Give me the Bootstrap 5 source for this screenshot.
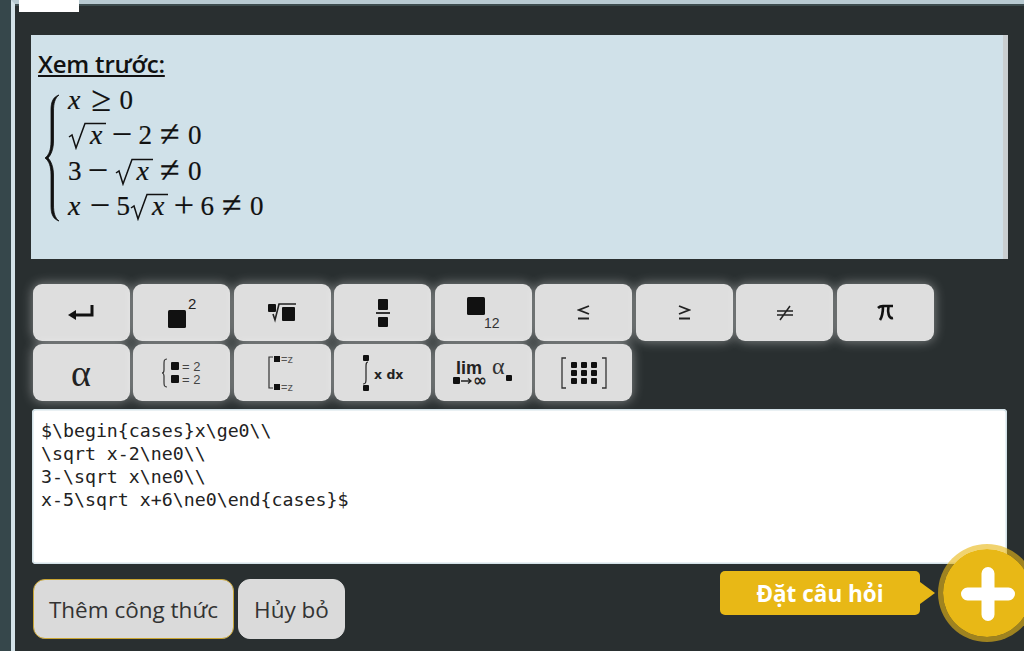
<!DOCTYPE html>
<html lang="vi">
<head>
<meta charset="utf-8">
<title>Xem trước</title>
<link href="https://cdn.jsdelivr.net/npm/bootstrap@5.3.0/dist/css/bootstrap.min.css" rel="stylesheet">
<style>
html,body{height:651px;overflow:hidden}
body{background:#292f30;font-family:"Open Sans",sans-serif;position:relative}
.shell{height:651px;margin-left:11px;border-left:4px solid #d3e2e8;border-top:4px solid #b8cad1;padding:31px 16px 0 16px;box-shadow:-11px 0 0 #36474b,inset 0 2px 0 #3d4c4e}
.top-tab{position:absolute;left:19px;top:0;width:60px;height:12px;background:#fff}
.preview-box{height:224px;background:#d0e1e9;border-right:5px solid #c9ced0;padding:16px 7px;color:#111}
.preview-title{font-size:24px;font-weight:600;text-decoration:underline;line-height:26px;letter-spacing:-.2px}
.math-area{margin:5px 0 0 6px;gap:8px;height:140px;align-items:flex-start}
.math-brace{margin-top:12px;flex:none}
.math-lines{font-family:"Liberation Serif",serif;font-size:27px;line-height:35.3px;color:#111;-webkit-text-stroke:.2px #111}
.math-line{height:35.3px;white-space:nowrap;display:flex;align-items:baseline}
.math-line i{font-size:28px;width:15.5px;display:inline-block}
.op-rel,.op-bin{display:inline-block;width:21px;text-align:center;font-size:36px;line-height:0;transform:translateY(2px);font-weight:300}
.op-rel{margin:0 7.5px}
.op-bin{margin:0 6px}
.rad{display:inline-flex;align-items:baseline;position:relative;padding-left:22px}
.rad svg{position:absolute;left:0;top:5px}
.key-grid{display:grid;grid-template-columns:repeat(9,97px);column-gap:3.5px;row-gap:3px;margin:25px 0 0 1.5px}
.key{height:57px;background:#dedede;border-radius:9px;box-shadow:0 0 12px rgba(255,255,255,.45);display:flex;align-items:center;justify-content:center;color:#111;padding:0;border:0}
.key-alpha{font-family:"Liberation Serif",serif;font-size:38px;line-height:1;color:#222}
.latex-input{display:block;width:975px;height:155px;margin:8px 0 0 1px;padding:11px 9px;border:0;border-radius:4px;box-shadow:inset 0 0 0 1.5px #d3e2e8;resize:none;background:#fff;font-family:"DejaVu Sans Mono","Liberation Mono",monospace;font-size:18.24px;line-height:22.9px;color:#222;overflow:hidden}
.act-row{gap:4px;margin:15px 0 0 2px}
.act-btn{height:60px;border-radius:12px;background:#dadada;color:#333;font-size:22.5px;font-family:"Open Sans",sans-serif;padding:1px 0 0;border:1px solid #dadada}
.act-main{border:1.5px solid #c9a533;width:201px}
.act-side{width:107px}
.ask-wrap{position:absolute;left:720px;top:544px;width:304px;height:107px}
.ask-label{position:absolute;left:0;top:27px;width:200px;height:44px;background:#e8b816;border-radius:5px;color:#fff;font-weight:700;font-size:22.5px;line-height:45px;text-align:center}
.ask-tip{position:absolute;left:200px;top:38px;width:0;height:0;border-left:15px solid #e8b816;border-top:11px solid transparent;border-bottom:11px solid transparent}
.ask-circle{position:absolute;left:218px;top:0;width:98px;height:98px;border-radius:50%;background:#e8b816;background-clip:padding-box;border:5px solid rgba(232,184,22,.62)}
.ask-circle svg{position:absolute;left:17px;top:17px}
</style>
</head>
<body>
<div class="top-tab"></div>
<div class="shell">
  <div class="preview-box">
    <div class="preview-title">Xem trước:</div>
    <div class="d-flex math-area">
      <svg class="math-brace" width="16" height="128" viewBox="0 0 16 128" aria-hidden="true"><path d="M15 1C9 3 7 8 7 16V47C7 56 5 61 1 64C5 67 7 72 7 81V112C7 120 9 125 15 127C11 124 9.500 119 9.500 111V81C9.500 73 7 67 4 64C7 61 9.500 55 9.500 47V17C9.500 9 11 4 15 1Z" fill="#111" stroke="#111" stroke-width=".8"/></svg>
      <div class="math-lines">
        <div class="math-line"><i>x</i><span class="op-rel">≥</span>0</div>
        <div class="math-line"><span class="rad"><svg width="38" height="28" viewBox="0 0 38 28"><path d="M1 15L4 13L8 26L17 1.500H38" fill="none" stroke="#111" stroke-width="1.500"/></svg><i>x</i></span><span class="op-bin">−</span>2<span class="op-rel">≠</span>0</div>
        <div class="math-line">3<span class="op-bin">−</span><span class="rad"><svg width="38" height="28" viewBox="0 0 38 28"><path d="M1 15L4 13L8 26L17 1.500H38" fill="none" stroke="#111" stroke-width="1.500"/></svg><i>x</i></span><span class="op-rel">≠</span>0</div>
        <div class="math-line"><i>x</i><span class="op-bin">−</span>5<span class="rad"><svg width="38" height="28" viewBox="0 0 38 28"><path d="M1 15L4 13L8 26L17 1.500H38" fill="none" stroke="#111" stroke-width="1.500"/></svg><i>x</i></span><span class="op-bin">+</span>6<span class="op-rel">≠</span>0</div>
      </div>
    </div>
  </div>
  <div class="key-grid">
    <button class="key" aria-label="enter"><svg width="28" height="20" viewBox="0 0 28 20"><path d="M25 2V12H6" fill="none" stroke="#111" stroke-width="3"/><path d="M1 12L9 7V17Z" fill="#111"/></svg></button>
    <button class="key" aria-label="mũ"><svg width="34" height="34" viewBox="0 0 34 34"><rect x="3" y="14" width="18" height="18" rx="1.500" fill="#111"/><text x="23" y="13" font-size="15" font-family="Liberation Sans" fill="#222">2</text></svg></button>
    <button class="key" aria-label="căn"><svg width="30" height="22" viewBox="0 0 30 22"><rect x="1" y="2" width="8" height="8" rx="1" fill="#111"/><path d="M6 12L8 18L12 2H29" fill="none" stroke="#222" stroke-width="1.600"/><rect x="15" y="5" width="13" height="14" rx="1" fill="#111"/></svg></button>
    <button class="key" aria-label="phân số"><svg width="14" height="28" viewBox="0 0 14 28"><rect x="2" y="0" width="10" height="11" rx="1" fill="#111"/><rect x="0" y="13" width="14" height="2" fill="#333"/><rect x="2" y="18" width="10" height="10" rx="1" fill="#111"/></svg></button>
    <button class="key" aria-label="chỉ số"><svg width="34" height="34" viewBox="0 0 34 34"><rect x="1" y="1" width="18" height="18" rx="1.500" fill="#111"/><text x="18" y="32" font-size="14" font-family="Liberation Sans" fill="#333">12</text></svg></button>
    <button class="key" aria-label="nhỏ hơn"><svg width="13" height="15" viewBox="0 0 13 15"><path d="M12 1L2 5L12 9M1 13.500H12" fill="none" stroke="#222" stroke-width="1.800"/></svg></button>
    <button class="key" aria-label="lớn hơn"><svg width="13" height="15" viewBox="0 0 13 15"><path d="M1 1L11 5L1 9M1 13.500H12" fill="none" stroke="#222" stroke-width="1.800"/></svg></button>
    <button class="key" aria-label="khác"><svg width="18" height="16" viewBox="0 0 18 16"><path d="M1 6H17M1 10H17M14 1L4 15" fill="none" stroke="#222" stroke-width="1.500"/></svg></button>
    <button class="key" aria-label="pi"><svg width="17" height="17" viewBox="0 0 17 17"><path d="M1 4C3 2 4 2 6 2H16M6 2C6 8 5 13 3 16M11.500 2C10.500 8 11.500 15 16 14" fill="none" stroke="#111" stroke-width="2.600"/></svg></button>
    <button class="key key-alpha">α</button>
    <button class="key" aria-label="hệ"><svg width="42" height="30" viewBox="0 0 42 30"><path d="M6 1C3 1 3 3 3 6V12C3 14 2 15 1 15C2 15 3 16 3 18V24C3 27 3 29 6 29" fill="none" stroke="#333" stroke-width="1.200"/><rect x="10" y="4" width="8" height="8" rx="1" fill="#111"/><rect x="10" y="17" width="8" height="8" rx="1" fill="#111"/><text x="21" y="12.500" font-size="13" font-family="Liberation Sans" fill="#444">= 2</text><text x="21" y="25.500" font-size="13" font-family="Liberation Sans" fill="#444">= 2</text></svg></button>
    <button class="key" aria-label="hoặc"><svg width="30" height="44" viewBox="0 -4 30 44"><path d="M6 2H2V33H6" fill="none" stroke="#333" stroke-width="1.200"/><rect x="7" y="1" width="6" height="6" fill="#111"/><rect x="7" y="29" width="6" height="6" fill="#111"/><text x="14" y="8" font-size="11" font-family="Liberation Sans" fill="#555">=z</text><text x="14" y="36" font-size="11" font-family="Liberation Sans" fill="#555">=z</text></svg></button>
    <button class="key" aria-label="tích phân"><svg width="44" height="36" viewBox="0 0 44 36"><rect x="2" y="0" width="6" height="6" rx="1" fill="#111"/><rect x="2" y="30" width="6" height="6" rx="1" fill="#111"/><path d="M7 7C5 7 5 9 5 12V24C5 27 5 29 2 29" fill="none" stroke="#222" stroke-width="1.200"/><text x="13" y="24" font-size="12.500" font-weight="700" font-family="DejaVu Sans" fill="#222">x dx</text></svg></button>
    <button class="key" aria-label="giới hạn"><svg width="62" height="42" viewBox="0 -4 62 42"><text x="4" y="18" font-size="18" font-family="Liberation Sans" font-weight="700" fill="#222">lim</text><rect x="1" y="21" width="7" height="7" rx="1" fill="#111"/><path d="M9 25H19M16 22.500L19 25L16 27.500" fill="none" stroke="#222" stroke-width="1.300"/><text x="21" y="30" font-size="17" font-weight="700" font-family="DejaVu Sans" fill="#222">∞</text><text x="40" y="18" font-size="24" font-family="Liberation Serif" fill="#333">α</text><rect x="54" y="19" width="6" height="6" rx="1" fill="#111"/></svg></button>
    <button class="key" aria-label="ma trận"><svg width="46" height="32" viewBox="0 0 46 32"><path d="M5 1H1V31H5M41 1H45V31H41" fill="none" stroke="#333" stroke-width="1.300"/><g fill="#111"><rect x="10" y="5" width="6" height="6" rx="1"/><rect x="20" y="5" width="6" height="6" rx="1"/><rect x="30" y="5" width="6" height="6" rx="1"/><rect x="10" y="13" width="6" height="6" rx="1"/><rect x="20" y="13" width="6" height="6" rx="1"/><rect x="30" y="13" width="6" height="6" rx="1"/><rect x="10" y="21" width="6" height="6" rx="1"/><rect x="20" y="21" width="6" height="6" rx="1"/><rect x="30" y="21" width="6" height="6" rx="1"/></g></svg></button>
  </div>
  <textarea class="latex-input" spellcheck="false">$\begin{cases}x\ge0\\
\sqrt x-2\ne0\\
3-\sqrt x\ne0\\
x-5\sqrt x+6\ne0\end{cases}$</textarea>
  <div class="d-flex act-row">
    <button class="btn act-btn act-main">Thêm công thức</button>
    <button class="btn act-btn act-side">Hủy bỏ</button>
  </div>
</div>
<div class="ask-wrap">
  <div class="ask-label">Đặt câu hỏi</div>
  <div class="ask-tip"></div>
  <div class="ask-circle"><svg width="56" height="56" viewBox="0 0 56 56"><path d="M28 7.500V48.500M7.500 28H48.500" stroke="#fff" stroke-width="13" stroke-linecap="round"/></svg></div>
</div>
</body>
</html>
